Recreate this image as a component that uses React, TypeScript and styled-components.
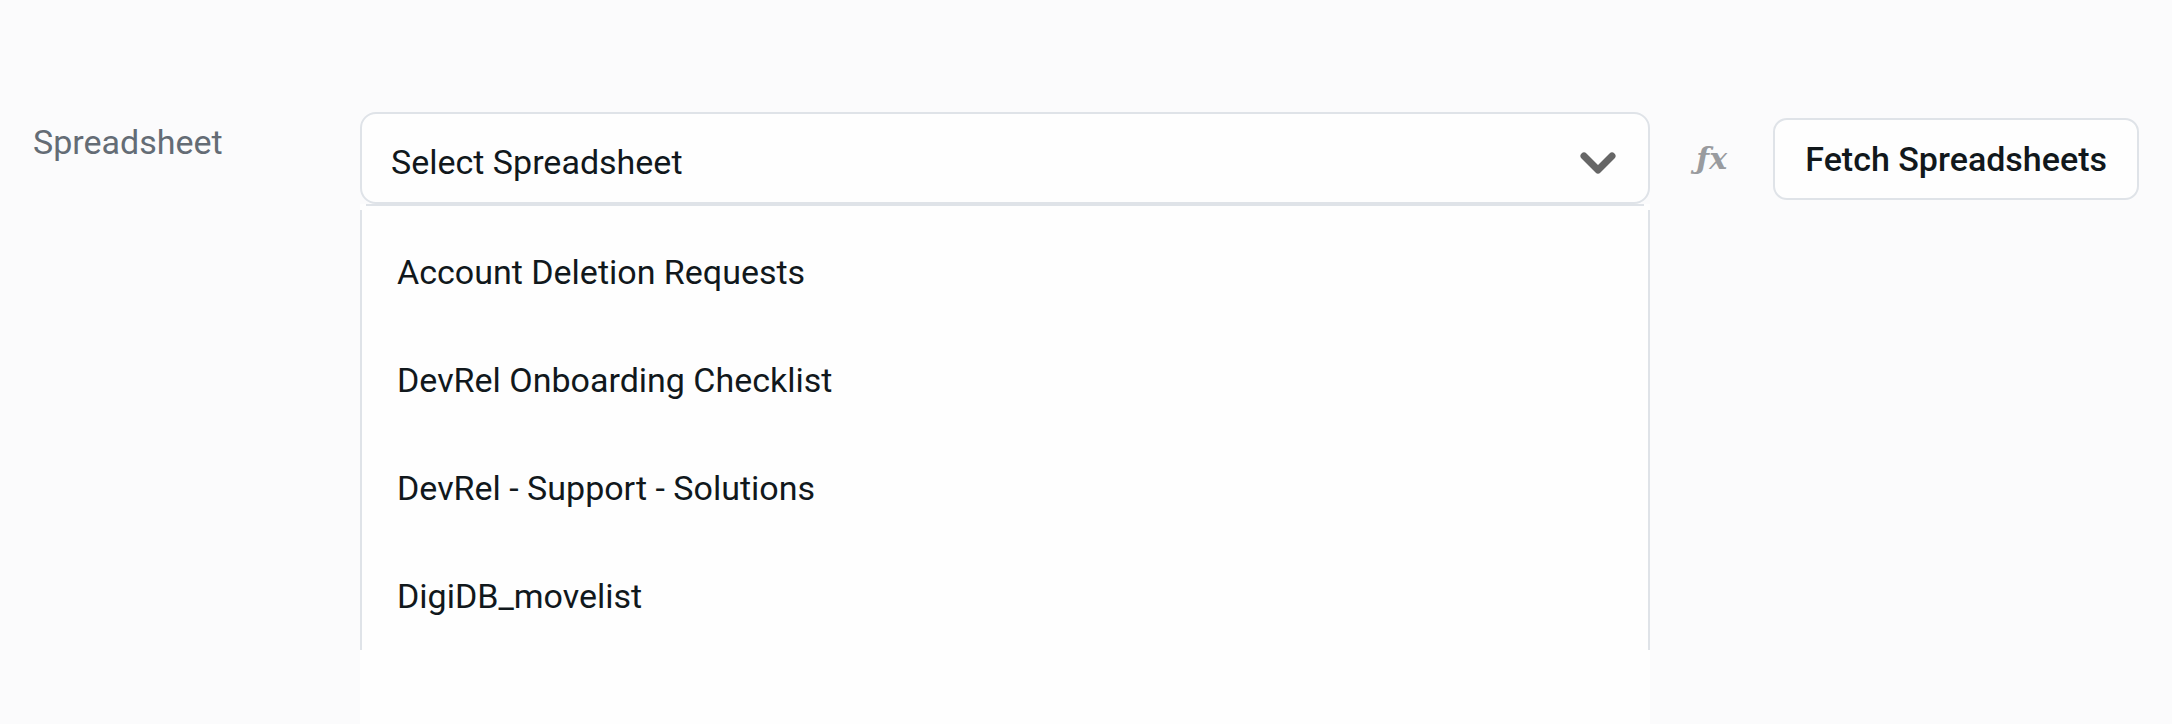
import React from 'react';
import styled, { createGlobalStyle } from 'styled-components';

const GlobalStyle = createGlobalStyle`
  * { box-sizing: border-box; }
  body { margin: 0; background: #fbfbfc; }
`;

const textFont = `Roboto, 'Liberation Sans', sans-serif`;
const line = '#dfe3e8';

const Page = styled.main`
  display: grid;
  grid-template-columns: 327px minmax(0, 1fr) 123px auto;
  min-height: 100vh;
  padding: 112px 33px 0;
  font: 400 34px/40px ${textFont};
  color: #11181c;
`;

const FieldLabel = styled.label`
  padding-top: 10px;
  color: #646c75;
`;

const Field = styled.div`
  display: flex;
  flex-direction: column;
`;

const SelectFrame = styled.div`
  display: grid;
  align-items: center;
  > * { grid-area: 1 / 1; }
`;

const Select = styled.select`
  appearance: none;
  width: 100%;
  height: 92px;
  padding: 8px 80px 0 29px;
  border: 2px solid ${line};
  border-radius: 16px;
  background: #fefefe;
  color: inherit;
  font: inherit;
`;

const Chevron = styled.svg`
  justify-self: end;
  width: 36px;
  height: 24px;
  margin: 10px 34px 0 0;
  pointer-events: none;
`;

const Menu = styled.div`
  flex: 1;
  background: #fefefe;
`;

const MenuEdge = styled.hr`
  height: 2px;
  margin: 0 6px 4px;
  border: 0;
  background: ${line};
`;

const OptionList = styled.ul`
  margin: 0;
  padding: 8px 0 0;
  border: solid ${line};
  border-width: 0 2px;
  list-style: none;
`;

const Option = styled.li`
  padding: 34px 35px;
  cursor: pointer;
`;

const FxButton = styled.button`
  justify-self: center;
  align-self: start;
  height: 82px;
  margin-top: 6px;
  padding: 0;
  border: 0;
  background: none;
  color: #999b9f;
  font: italic 700 30px/40px 'DejaVu Serif', serif;
`;

const FetchButton = styled.button`
  align-self: start;
  height: 82px;
  margin-top: 6px;
  padding: 0 30px;
  border: 2px solid ${line};
  border-radius: 14px;
  background: #fefefe;
  color: inherit;
  font: inherit;
  font-weight: 500;
`;

const spreadsheets = [
  'Account Deletion Requests',
  'DevRel Onboarding Checklist',
  'DevRel - Support - Solutions',
  'DigiDB_movelist',
];

export default function App() {
  return (
    <>
      <GlobalStyle />
      <Page>
        <FieldLabel htmlFor="spreadsheet">Spreadsheet</FieldLabel>
        <Field>
          <SelectFrame>
            <Select id="spreadsheet" defaultValue="">
              <option value="">Select Spreadsheet</option>
              {spreadsheets.map((name) => (
                <option key={name}>{name}</option>
              ))}
            </Select>
            <Chevron viewBox="0 0 36 24" aria-hidden="true">
              <path
                d="M4 5L18 19L32 5"
                fill="none"
                stroke="#666"
                strokeWidth="7"
                strokeLinecap="round"
                strokeLinejoin="round"
              />
            </Chevron>
          </SelectFrame>
          <Menu>
            <MenuEdge />
            <OptionList role="listbox" aria-label="Spreadsheet">
              {spreadsheets.map((name) => (
                <Option key={name} role="option" aria-selected={false}>
                  {name}
                </Option>
              ))}
            </OptionList>
          </Menu>
        </Field>
        <FxButton type="button">ƒx</FxButton>
        <FetchButton type="button">Fetch Spreadsheets</FetchButton>
      </Page>
    </>
  );
}
